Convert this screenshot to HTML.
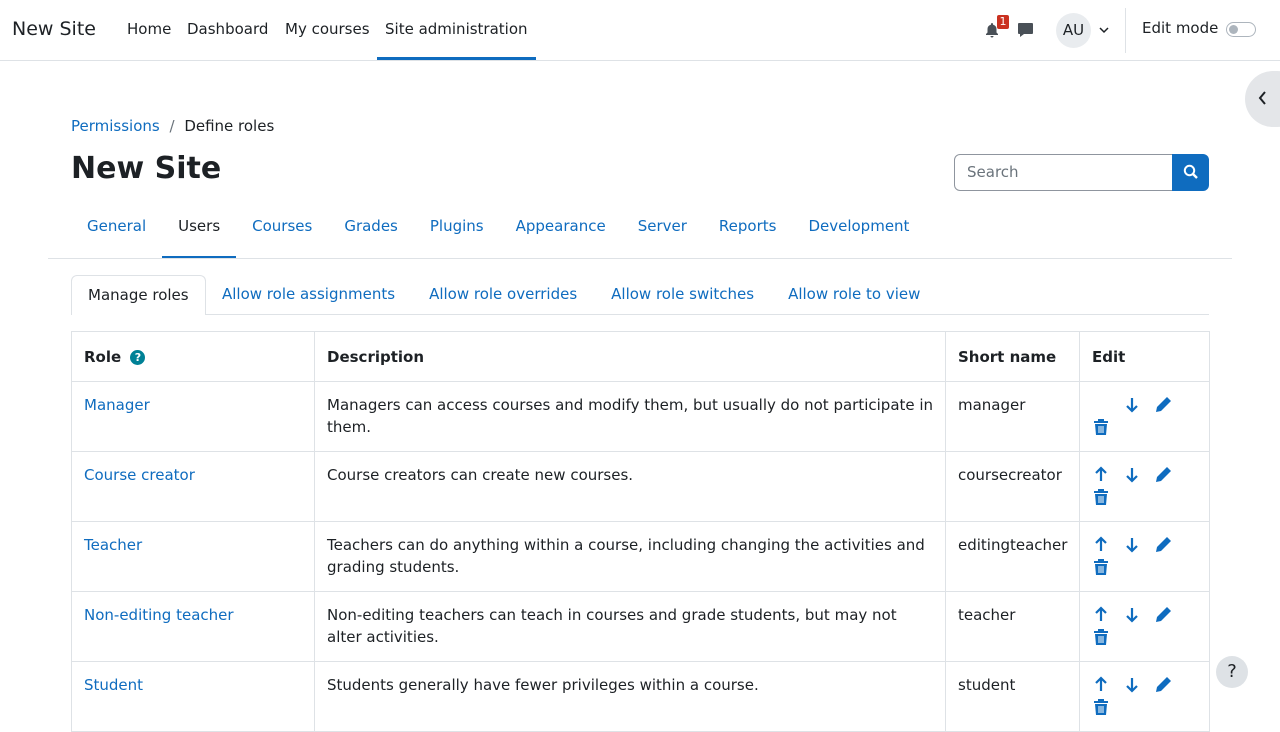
<!DOCTYPE html>
<html><head><meta charset="utf-8"><style>
*{box-sizing:border-box;margin:0;padding:0}
body{width:1280px;height:720px;overflow:hidden;font-family:"DejaVu Sans","Liberation Sans",sans-serif;font-size:15px;color:#1d2125;background:#fff;position:relative}
a{color:#0f6cbf;text-decoration:none}
.abs{position:absolute;white-space:nowrap}
.nav{position:absolute;left:0;top:0;width:1280px;height:61px;border-bottom:1px solid #dee2e6}
table{position:absolute;left:71px;top:331px;border-collapse:collapse;width:1138px;table-layout:fixed}
td,th{border:1px solid #dee2e6;vertical-align:top;text-align:left;padding:12px 12px;line-height:22px}
th{height:50px;vertical-align:middle;padding-top:13px}
td{height:70px}
td:nth-child(2){padding-right:10px}
td:last-child{padding-left:10px}
.ic{display:inline-block;width:22px;height:22px;vertical-align:top;margin-right:9px}
</style></head><body>
<div class="nav">
<div class="abs" style="left:12px;top:18px;font-size:19px">New Site</div>
<div class="abs" style="left:127px;top:20px">Home</div>
<div class="abs" style="left:187px;top:20px">Dashboard</div>
<div class="abs" style="left:285px;top:20px">My courses</div>
<div class="abs" style="left:385px;top:20px">Site administration</div>
<div class="abs" style="left:377px;top:57px;width:159px;height:3px;background:#0f6cbf"></div>
<svg class="abs" style="left:984px;top:22px" width="16" height="16" viewBox="0 0 16 16"><path d="M8 1a1 1 0 011 1v.6A4.5 4.5 0 0112.5 7v3.5L14 12v1H2v-1l1.5-1.5V7A4.5 4.5 0 017 2.6V2a1 1 0 011-1zM6.5 14h3a1.5 1.5 0 01-3 0z" fill="#495057"/></svg>
<div class="abs" style="left:997px;top:15px;width:12px;height:14px;background:#ca3120;color:#fff;font-size:11px;line-height:14px;text-align:center;border-radius:2px">1</div>
<svg class="abs" style="left:1017px;top:22px" width="17" height="16" viewBox="0 0 17 16"><path d="M2 1h13a1 1 0 011 1v9a1 1 0 01-1 1H7l-4 3v-3H2a1 1 0 01-1-1V2a1 1 0 011-1z" fill="#495057"/></svg>
<div class="abs" style="left:1056px;top:13px;width:35px;height:35px;border-radius:50%;background:#e9ecef;text-align:center;line-height:35px;font-size:15px">AU</div>
<svg class="abs" style="left:1099px;top:27px" width="10" height="7"><path d="M1 1l4 4 4-4" stroke="#1d2125" stroke-width="1.5" fill="none"/></svg>
<div class="abs" style="left:1125px;top:8px;width:1px;height:45px;background:#dee2e6"></div>
<div class="abs" style="left:1142px;top:19px">Edit mode</div>
<div class="abs" style="left:1226px;top:22px;width:30px;height:15px;border:1px solid #adb5bd;border-radius:8px"><div style="margin:2px;width:9px;height:9px;border-radius:50%;background:#adb5bd"></div></div>
</div>
<div class="abs" style="left:1245px;top:71px;width:60px;height:56px;border-radius:28px;background:#e4e6e9"></div>
<svg class="abs" style="left:1258px;top:91px" width="10" height="14"><path d="M7 1L2 7l5 6" stroke="#1d2125" stroke-width="2" fill="none"/></svg>
<div class="abs" style="left:71px;top:117px"><a>Permissions</a><span style="color:#6a737b;margin:0 5px"> / </span>Define roles</div>
<div class="abs" style="left:71px;top:151px;font-size:30px;font-weight:bold">New Site</div>
<div class="abs" style="left:954px;top:154px;width:219px;height:37px;border:1px solid #8f959e;border-radius:6px 0 0 6px;padding:8px 12px;color:#6a737b">Search</div>
<div class="abs" style="left:1172px;top:154px;width:37px;height:37px;background:#0f6cbf;border-radius:0 6px 6px 0"></div>
<svg class="abs" style="left:1183px;top:164px" width="16" height="16"><circle cx="6.5" cy="6.5" r="4.7" stroke="#fff" stroke-width="2" fill="none"/><path d="M10 10l4 4" stroke="#fff" stroke-width="2.4"/></svg>
<div class="abs" style="left:87px;top:217px;color:#0f6cbf"><span>General</span><span style="margin-left:32px;color:#1d2125">Users</span><span style="margin-left:32px">Courses</span><span style="margin-left:32px">Grades</span><span style="margin-left:32px">Plugins</span><span style="margin-left:32px">Appearance</span><span style="margin-left:32px">Server</span><span style="margin-left:32px">Reports</span><span style="margin-left:32px">Development</span></div>
<div class="abs" style="left:162px;top:256px;width:74px;height:3px;background:#0f6cbf"></div>
<div class="abs" style="left:48px;top:258px;width:1184px;height:1px;background:#dee2e6"></div>
<div class="abs" style="left:71px;top:314px;width:1138px;height:1px;background:#dee2e6"></div>
<div class="abs" style="left:71px;top:275px;width:135px;height:40px;border:1px solid #dee2e6;border-bottom:none;border-radius:6px 6px 0 0;background:#fff;padding:10px 16px">Manage roles</div>
<div class="abs" style="left:222px;top:285px;color:#0f6cbf">Allow role assignments<span style="margin-left:34px">Allow role overrides</span><span style="margin-left:34px">Allow role switches</span><span style="margin-left:34px">Allow role to view</span></div>
<table>
<colgroup><col style="width:243px"><col style="width:631px"><col style="width:134px"><col style="width:130px"></colgroup>
<tr><th>Role <span style="display:inline-block;width:15px;height:15px;border-radius:50%;background:#008196;color:#fff;font-size:11px;line-height:15px;text-align:center;vertical-align:1px;margin-left:4px">?</span></th><th>Description</th><th>Short name</th><th>Edit</th></tr>
<tr><td><a>Manager</a></td><td>Managers can access courses and modify them, but usually do not participate in them.</td><td>manager</td><td>ICONS0</td></tr>
<tr><td><a>Course creator</a></td><td>Course creators can create new courses.</td><td>coursecreator</td><td>ICONS</td></tr>
<tr><td><a>Teacher</a></td><td>Teachers can do anything within a course, including changing the activities and grading students.</td><td>editingteacher</td><td>ICONS</td></tr>
<tr><td><a>Non-editing teacher</a></td><td>Non-editing teachers can teach in courses and grade students, but may not alter activities.</td><td>teacher</td><td>ICONS</td></tr>
<tr><td><a>Student</a></td><td>Students generally have fewer privileges within a course.</td><td>student</td><td>ICONS</td></tr>
</table>
<div class="abs" style="left:1216px;top:656px;width:32px;height:32px;border-radius:50%;background:#dee2e6;text-align:center;line-height:32px;font-size:18px">?</div>
<script>
var up='<svg class="ic" viewBox="0 0 22 22"><path d="M11 4v13M6 9l5-5 5 5" stroke="#0f6cbf" stroke-width="2.2" fill="none"/></svg>';
var dn='<svg class="ic" viewBox="0 0 22 22"><path d="M11 4v13M6 12l5 5 5-5" stroke="#0f6cbf" stroke-width="2.2" fill="none"/></svg>';
var bl='<span class="ic"></span>';
var pen='<svg class="ic" viewBox="0 0 22 22"><path d="M15 3l4 4-10 10-5 1 1-5z" fill="#0f6cbf"/></svg>';
var tr='<br><svg class="ic" viewBox="0 0 22 22"><path d="M4 5h14v2H4zM8 3h6v2H8zM5 8h12l-1 11H6z" fill="#0f6cbf"/><path d="M9 10v7M11 10v7M13 10v7" stroke="#fff" stroke-width="1"/></svg>';
document.querySelectorAll('td').forEach(function(t){if(t.textContent=='ICONS0')t.innerHTML=bl+dn+pen+tr;else if(t.textContent=='ICONS')t.innerHTML=up+dn+pen+tr;});
</script>
</body></html>
